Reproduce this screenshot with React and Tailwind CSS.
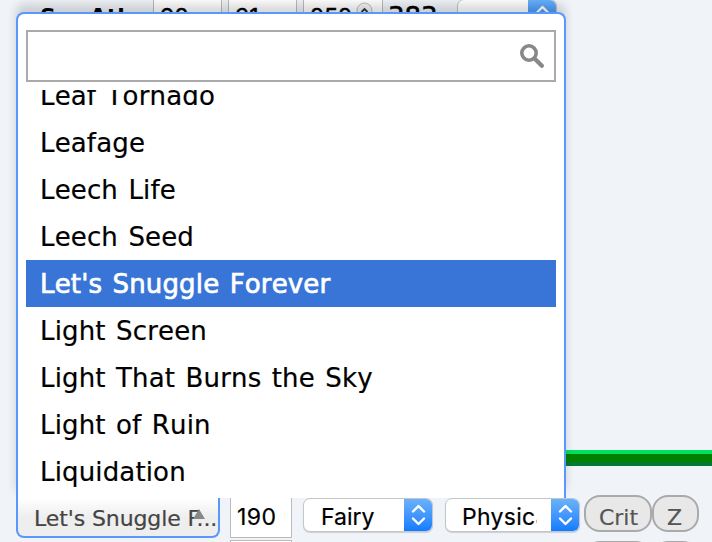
import { useState } from "react";

const moves = [
  "Leaf Tornado",
  "Leafage",
  "Leech Life",
  "Leech Seed",
  "Let's Snuggle Forever",
  "Light Screen",
  "Light That Burns the Sky",
  "Light of Ruin",
  "Liquidation",
];

function Arrows() {
  return (
    <svg width="29" height="34" viewBox="0 0 29 34" fill="none" stroke="white" strokeWidth="2.4" strokeLinecap="round" strokeLinejoin="round">
      <path d="M9 13.5 14.5 8 20 13.5M9 20.5 14.5 26 20 20.5" />
    </svg>
  );
}

function NativeSelect({ label, className, textClass }) {
  return (
    <button
      className={`flex h-[34px] shrink-0 overflow-hidden rounded-[7px] border border-[#c4c6cb] bg-white font-['Inter',sans-serif] text-[23px] leading-[36px] text-black shadow-[0_1px_1px_rgba(0,0,0,0.15)] [-webkit-text-stroke:0.2px_black] ${className}`}
    >
      <span className={`block overflow-hidden whitespace-nowrap text-left ${textClass}`}>{label}</span>
      <span className="-my-px -mr-px ml-auto h-[34px] w-[29px] shrink-0 bg-gradient-to-b from-[#6cb3fa] to-[#077aff]">
        <Arrows />
      </span>
    </button>
  );
}

function StatBox({ value, className, children }) {
  return (
    <div
      className={`relative h-[36px] shrink-0 overflow-hidden border-x border-[#bbb] bg-white pl-[6px] font-['Inter',sans-serif] text-[23px] leading-[34px] [-webkit-text-stroke:0.5px_black] ${className}`}
    >
      {value}
      {children}
    </div>
  );
}

function StatRow() {
  return (
    <div className="flex h-[38px] w-[712px] shrink-0 items-start overflow-hidden">
      <span className="ml-10 w-[113px] shrink-0 font-['DejaVu_Sans',sans-serif] text-[22px] leading-[34px] font-bold whitespace-nowrap [word-spacing:2px]">
        Sp. Atk
      </span>
      <StatBox value="90" className="w-[69px]" />
      <StatBox value="31" className="ml-[6px] w-[69px]" />
      <StatBox value="252" className="ml-[6px] w-[80px]">
        <svg className="absolute top-[2px] right-[9px]" width="17" height="28" viewBox="0 0 17 28" fill="#f4f4f4" stroke="#bbb">
          <rect x="1" y="1" width="15" height="26" rx="7.5" />
          <path d="m5.5 10 3-3 3 3" stroke="#333" strokeWidth="1.8" fill="none" />
        </svg>
      </StatBox>
      <span className="ml-[5px] w-[69px] shrink-0 font-['DejaVu_Sans',sans-serif] text-[26px] leading-[35px] [-webkit-text-stroke:0.6px_black]">
        383
      </span>
      <NativeSelect className="-mt-px w-[100px]" textClass="w-0" />
    </div>
  );
}

function MoveDropdown({ selected, onSelect }) {
  const [query, setQuery] = useState("");
  const visible = moves.filter((m) => m.toLowerCase().includes(query.toLowerCase()));

  return (
    <div className="absolute top-3 left-4 flex h-[486px] w-[550px] flex-col rounded-t-[8px] border-2 border-b-0 border-[#5897fb] bg-white px-2 pt-4 shadow-[0_-8px_10px_rgba(0,0,0,0.15)]">
      <div className="flex h-[52px] shrink-0 items-center border-2 border-[#aaa] bg-white pr-[10px]">
        <input
          value={query}
          onChange={(e) => setQuery(e.target.value)}
          className="min-w-0 flex-1 px-2 font-['DejaVu_Sans',sans-serif] text-[26px] outline-none"
        />
        <svg width="24" height="24" viewBox="0 0 24 24" fill="none" stroke="#888">
          <circle cx="9" cy="9" r="7.2" strokeWidth="3.6" />
          <path d="m14.5 14.5 7.3 7.3" strokeWidth="4.2" strokeLinecap="round" />
        </svg>
      </div>
      <ul className="mt-2 h-[405px] overflow-hidden">
        {visible.map((move) => (
          <li
            key={move}
            onClick={() => onSelect(move)}
            className={`h-[47px] cursor-pointer pl-[14px] font-['DejaVu_Sans',sans-serif] text-[26px] leading-[48px] tracking-[0.15px] whitespace-nowrap [font-kerning:none] [word-spacing:2px] first:-mt-[18px] ${
              move === selected
                ? "bg-[#3875d7] text-white [-webkit-text-stroke:0.7px_white]"
                : "text-black [-webkit-text-stroke:0.2px_black]"
            }`}
          >
            {move}
          </li>
        ))}
      </ul>
    </div>
  );
}

export default function App() {
  const [selected, setSelected] = useState("Let's Snuggle Forever");

  return (
    <div className="relative flex h-[542px] w-[712px] flex-col overflow-hidden bg-[#f0f3f8] text-black">
      <StatRow />

      <div className="mt-[412px] ml-[540px] h-4 shrink-0 border-t-4 border-b-4 border-t-[#00e060] border-b-[#007a33] bg-[#008000]" />

      <div className="mt-[29px] flex h-[43px] shrink-0 items-start pl-4">
        <button className="relative mt-[3px] h-[40px] w-[204px] shrink-0 rounded-b-[8px] border-2 border-t-0 border-[#5897fb] bg-gradient-to-b from-white to-[#eee] to-50% pl-4 text-left font-['DejaVu_Sans',sans-serif] text-[22px] leading-[41px] tracking-[-0.1px] whitespace-nowrap text-[#444] [-webkit-text-stroke:0.2px_#444]">
          {selected.length > 15 ? `${selected.slice(0, 15)}...` : selected}
          <svg className="absolute top-[11px] left-[175px]" width="12" height="10" viewBox="0 0 12 10" fill="#888">
            <path d="M6 0 12 10H0Z" />
          </svg>
        </button>
        <div className="mt-[3px] ml-[10px] h-[40px] w-[62px] shrink-0 border border-t-0 border-[#bbb] bg-white pl-[6px] font-['Inter',sans-serif] text-[23px] leading-[38px] tracking-[0.4px] [-webkit-text-stroke:0.2px_black]">
          190
        </div>
        <NativeSelect label="Fairy" className="mt-[3px] ml-[11px] w-[130px]" textClass="ml-[17px] w-[70px]" />
        <NativeSelect label="Physical" className="mt-[3px] ml-[12px] w-[135px]" textClass="ml-[16px] w-[75px] tracking-[0.3px]" />
        <button className="ml-1 h-[37px] w-[68px] shrink-0 rounded-[16px] border-2 border-[#aaa] bg-[#e8e8e8] pt-[5px] pl-px font-['DejaVu_Sans',sans-serif] text-[22px] leading-[32px] text-[#555] [-webkit-text-stroke:0.2px_#555]">
          Crit
        </button>
        <button className="h-[37px] w-[47px] shrink-0 rounded-[16px] border-2 border-[#aaa] bg-[#e8e8e8] pt-[5px] pr-[2px] font-['DejaVu_Sans',sans-serif] text-[22px] leading-[32px] text-[#555] [-webkit-text-stroke:0.2px_#555]">
          Z
        </button>
      </div>

      {/* top edge of the next move row */}
      <div className="mt-[2px] flex h-[2px] shrink-0 overflow-hidden pl-[230px]">
        <div className="h-[40px] w-[62px] shrink-0 border border-[#bbb] bg-white" />
        <div className="mt-px ml-[292px] h-[37px] w-[68px] shrink-0 rounded-[16px] border-2 border-[#aaa] bg-[#e8e8e8]" />
        <div className="mt-px h-[37px] w-[47px] shrink-0 rounded-[16px] border-2 border-[#aaa] bg-[#e8e8e8]" />
      </div>

      <MoveDropdown selected={selected} onSelect={setSelected} />
    </div>
  );
}
